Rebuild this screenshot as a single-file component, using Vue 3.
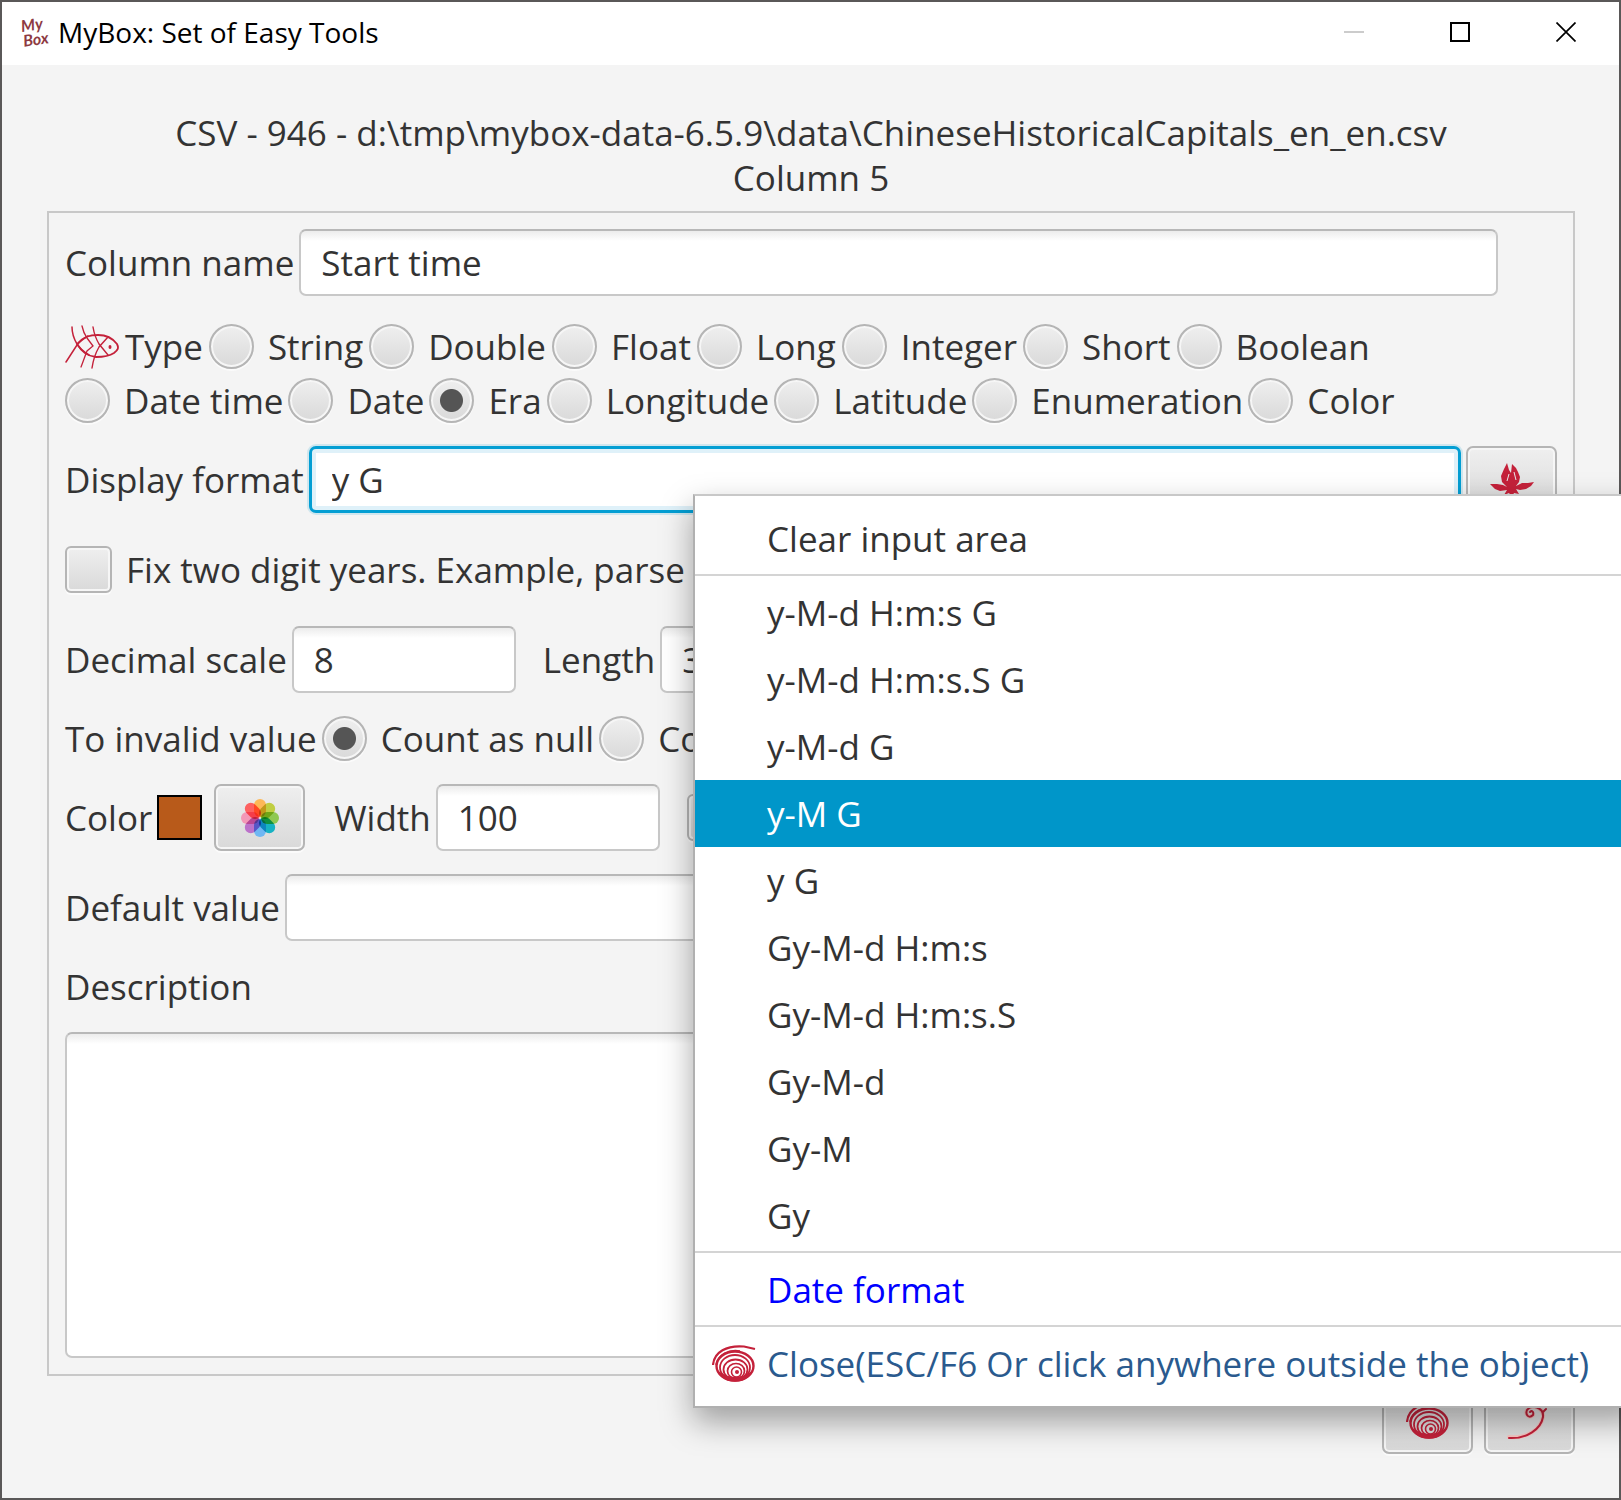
<script setup>
import { ref } from 'vue'

const columnName = ref('Start time')
const type = ref('Era')
const typeRows = [
  ['String', 'Double', 'Float', 'Long', 'Integer', 'Short', 'Boolean'],
  ['Date time', 'Date', 'Era', 'Longitude', 'Latitude', 'Enumeration', 'Color'],
]
const format = ref('y G')
const fixYears = ref(false)
const scale = ref('8')
const length = ref('32767')
const invalid = ref('null')
const width = ref('100')
const defaultValue = ref('')
const description = ref('')

const formats = [
  'y-M-d H:m:s G',
  'y-M-d H:m:s.S G',
  'y-M-d G',
  'y-M G',
  'y G',
  'Gy-M-d H:m:s',
  'Gy-M-d H:m:s.S',
  'Gy-M-d',
  'Gy-M',
  'Gy',
]
const hovered = 'y-M G'

const petals = [
  '#ffb347', '#bccb2f', '#85c440', '#00adc0',
  '#63b3f5', '#b866c8', '#f48fb1', '#ff5252',
]
</script>

<template>
  <div class="window">
    <header class="titlebar">
      <svg class="logo" viewBox="0 0 32 36" aria-hidden="true">
        <g transform="rotate(-8 16 18)" fill="#8d3a42">
          <text x="2" y="16" class="logo-text">My</text>
          <text x="2" y="31" class="logo-text">Box</text>
        </g>
      </svg>
      <span class="app-name">MyBox: Set of Easy Tools</span>
      <div class="controls">
        <button type="button" class="control" aria-label="Minimize" disabled>
          <svg width="20" height="20" viewBox="0 0 20 20"><path d="M0 10H20" stroke="#ccc" stroke-width="2" /></svg>
        </button>
        <button type="button" class="control" aria-label="Maximize">
          <svg width="20" height="20" viewBox="0 0 20 20"><rect x="1" y="1" width="18" height="18" fill="none" stroke="#000" stroke-width="2" /></svg>
        </button>
        <button type="button" class="control" aria-label="Close window">
          <svg width="20" height="20" viewBox="0 0 20 20"><path d="M0.500 0.500L19.500 19.500M19.500 0.500L0.500 19.500" stroke="#000" stroke-width="1.700" /></svg>
        </button>
      </div>
    </header>

    <main class="content">
      <h1 class="heading">
        CSV - 946 - d:\tmp\mybox-data-6.5.9\data\ChineseHistoricalCapitals_en_en.csv<br />Column 5
      </h1>

      <form class="panel" @submit.prevent>
        <div class="row name-row">
          <label for="name">Column name</label>
          <input id="name" v-model="columnName" class="field grow" type="text" />
        </div>

        <div class="types" role="radiogroup" aria-label="Type">
          <div v-for="(row, i) in typeRows" :key="i" class="type-row">
            <template v-if="i === 0">
              <svg class="fish" viewBox="0 0 54 46" fill="none" stroke="#c4213a" stroke-linecap="round" aria-hidden="true">
                <path d="M12 21C19 13 26 12 33 12C43 12 49 17 52 21C54 25 53 27 49 30C43 34 37 34 31 34C22 33 17 29 12 21" stroke-width="1.800" />
                <path d="M7 4C7 10 9 16 12 21C15 26 19 29 24 32M1 39L12 22C15 18 18 16 23 13" stroke-width="1.500" />
                <path d="M17 3C18 8 20 12 22 15L28 23L22 28C20 33 18 39 16 44" stroke-width="1.300" />
                <path d="M28 4C29 10 31 16 34 21L43 32M27 45C28 38 30 31 34 24L43 14" stroke-width="1.400" />
                <ellipse cx="45" cy="24" rx="1.500" ry="2" fill="#c4213a" stroke="none" />
              </svg>
              <span class="type-caption">Type</span>
            </template>
            <label v-for="name in row" :key="name" class="option">
              <input v-model="type" class="radio" type="radio" name="type" :value="name" />{{ name }}
            </label>
          </div>
        </div>

        <div class="row">
          <label for="format">Display format</label>
          <input id="format" v-model="format" class="field grow focused" type="text" />
          <button type="button" class="tool" aria-label="Examples">
            <svg width="44" height="36" viewBox="0 0 44 36" fill="#c4213a" aria-hidden="true">
              <path d="M17 1L19 8L21 11L22 2L26 6L28 10L30 15L29 20L26 24L32 21L38 21L44 20L41 24L36 27L30 28L26 27L29 32L24 31L22 35L19 31L14 33L17 28L10 29L5 27L0 22L7 22L13 23L17 25L12 20L11 14L14 7Z" />
              <path d="M19 12L17 19M24 10L26 18" stroke="#eaeaea" stroke-width="1" />
            </svg>
          </button>
        </div>

        <div class="row check-row">
          <label class="option">
            <input v-model="fixYears" class="checkbox" type="checkbox" />Fix two digit years. Example, parse y
          </label>
        </div>

        <div class="row">
          <label for="scale">Decimal scale</label>
          <input id="scale" v-model="scale" class="field short" type="text" />
          <label for="length" class="next">Length</label>
          <input id="length" v-model="length" class="field short" type="text" />
        </div>

        <div class="row radio-row" role="radiogroup" aria-label="To invalid value">
          <span>To invalid value</span>
          <label class="option"><input v-model="invalid" class="radio" type="radio" name="invalid" value="null" />Count as null</label>
          <label class="option"><input v-model="invalid" class="radio" type="radio" name="invalid" value="zero" />Co</label>
        </div>

        <div class="row">
          <span>Color</span>
          <span class="swatch"></span>
          <button type="button" class="tool palette" aria-label="Pick color">
            <svg class="flower" width="38" height="38" viewBox="-19 -19 38 38" aria-hidden="true">
              <rect
                v-for="(c, i) in petals"
                :key="c"
                class="petal"
                x="-6"
                y="-19"
                width="12"
                height="18"
                rx="6"
                :fill="c"
                :transform="`rotate(${i * 45})`"
              />
            </svg>
          </button>
          <label for="width" class="next">Width</label>
          <input id="width" v-model="width" class="field short" type="text" />
          <input class="checkbox next" type="checkbox" aria-label="Editable" />
        </div>

        <div class="row default-row">
          <label for="default">Default value</label>
          <input id="default" v-model="defaultValue" class="field grow" type="text" />
        </div>

        <label for="description" class="row description-label">Description</label>
        <textarea id="description" v-model="description" class="field area"></textarea>
      </form>

      <footer class="actions">
        <button type="button" class="tool" aria-label="Close">
          <svg class="spiral" viewBox="0 0 44 37"><use href="#shell" /></svg>
        </button>
        <button type="button" class="tool" aria-label="OK">
          <svg width="46" height="38" viewBox="0 0 46 38" fill="none" stroke-linecap="round" aria-hidden="true">
            <path d="M2 35C20 37 34 27 36 15C37 5 24 2 20 8C18 13 22 17 26 13" stroke="#fac8c4" stroke-width="4" />
            <path d="M2 36C20 37 34 27 36 15C37 5 24 2 20 8C18 13 22 17 26 13C27 10 25 8 23 10M36 10L39 7" stroke="#c4213a" stroke-width="2" />
          </svg>
        </button>
      </footer>
    </main>

    <div class="menu" role="menu">
      <button type="button" class="item" role="menuitem">Clear input area</button>
      <hr class="rule" />
      <button
        v-for="f in formats"
        :key="f"
        type="button"
        class="item"
        :class="{ hovered: f === hovered }"
        role="menuitem"
      >{{ f }}</button>
      <hr class="rule" />
      <a class="item link" href="#" role="menuitem">Date format</a>
      <hr class="rule" />
      <button type="button" class="item close" role="menuitem">
        <svg class="spiral" viewBox="0 0 44 37" aria-hidden="true">
          <g id="shell" fill="none" stroke="#c4213a">
            <path d="M1 20C2 7 15 0 32 1.500L43 4" stroke-width="2.200" />
            <path d="M4 20C6 10 16 4 28 6" stroke-width="1.500" />
            <ellipse cx="23" cy="21" rx="18.500" ry="14.500" stroke-width="2.400" />
            <ellipse cx="23" cy="22.500" rx="15" ry="12.500" stroke-width="1.800" />
            <ellipse cx="23.500" cy="24.500" rx="12" ry="10" stroke-width="1.800" />
            <ellipse cx="24" cy="26" rx="8.500" ry="7.500" stroke-width="1.700" />
            <ellipse cx="24.500" cy="27" rx="5" ry="5" stroke-width="1.600" />
            <circle cx="25" cy="27" r="2" fill="#c4213a" stroke="none" />
            <path d="M5 24C9 41 37 41 41 24C35 34 13 35 5 24Z" fill="#c4213a" stroke="none" />
          </g>
        </svg>
        Close(ESC/F6 Or click anywhere outside the object)
      </button>
    </div>
  </div>
</template>

<style>
body {
  margin: 0;
}
</style>

<style scoped>
.window,
.window * {
  box-sizing: border-box;
}
.window {
  position: relative;
  display: flex;
  flex-direction: column;
  min-height: 100vh;
  padding: 2px;
  overflow: hidden;
  background: #5a5858;
  color: #333;
  font-family: 'Open Sans', 'Noto Sans', sans-serif;
  font-size: 35px;
  line-height: 45px;
}
button,
input,
textarea {
  margin: 0;
  font: inherit;
  color: inherit;
}
.titlebar {
  display: flex;
  align-items: center;
  height: 63px;
  padding: 0 0 3px 18px;
  background: #fff;
  color: #000;
  font-size: 28px;
}
.logo {
  width: 32px;
  height: 36px;
  margin-right: 6px;
  overflow: visible;
}
.logo-text {
  font: italic 700 16px Lato, sans-serif;
}
.app-name {
  flex: 1;
}
.controls {
  display: flex;
}
.control {
  display: flex;
  align-items: center;
  justify-content: center;
  width: 106px;
  height: 60px;
  padding: 0;
  border: 0;
  background: none;
}
.content {
  flex: 1;
  display: flex;
  flex-direction: column;
  padding: 45px 44px 44px 45px;
  background: #f4f4f4;
}
.heading {
  margin: 0 0 11px;
  font-size: inherit;
  font-weight: 400;
  text-align: center;
}
.panel {
  flex: 1;
  display: flex;
  flex-direction: column;
  gap: 18px;
  padding: 16px;
  border: 2px solid #c8c8c8;
}
.row {
  display: flex;
  align-items: center;
  gap: 5px;
  white-space: nowrap;
}
.name-row {
  padding-right: 59px;
}
.field {
  height: 67px;
  min-width: 0;
  padding: 0 20px;
  border: 2px solid #c8c8c8;
  border-top-color: #b8b8b8;
  border-radius: 7px;
  outline: 0;
  background: linear-gradient(#ececec, #fff 10px);
}
.grow {
  flex: 1;
}
.short {
  width: 224px;
}
.focused {
  border: 3px solid #039ed3;
  background: #fff;
  box-shadow: 0 0 0 2px #cfe6ee, inset 0 0 0 4px #dff1f9;
}
.types {
  padding: 5px 0 1px;
}
.type-row {
  display: flex;
  align-items: center;
  gap: 5px;
  height: 54px;
  white-space: nowrap;
}
.type-row:first-child {
  gap: 6px;
}
.fish {
  width: 54px;
  height: 46px;
}
.option {
  display: flex;
  align-items: center;
  gap: 14px;
}
.radio,
.checkbox {
  appearance: none;
  flex: none;
  width: 45px;
  height: 45px;
  border: 2px solid #b5b5b5;
  background: linear-gradient(#efefef, #d9d9d9);
  box-shadow: inset 0 0 0 2px #f6f6f6, 0 2px 0 #fbfbfb;
}
.radio {
  border-radius: 50%;
}
.radio:checked {
  background: radial-gradient(circle, #555 11px, transparent 12px), linear-gradient(#efefef, #d9d9d9);
}
.checkbox {
  width: 47px;
  height: 47px;
  border-radius: 6px;
}
.check-row {
  height: 77px;
}
.radio-row {
  height: 55px;
}
.next {
  margin-left: 22px;
}
.tool {
  display: flex;
  align-items: center;
  justify-content: center;
  width: 91px;
  height: 67px;
  padding: 0;
  border: 2px solid #b5b5b5;
  border-radius: 7px;
  background: linear-gradient(#efefef, #d9d9d9);
  box-shadow: inset 0 0 0 2px #f6f6f6, 0 2px 0 #fbfbfb;
}
.swatch {
  width: 45px;
  height: 45px;
  border: 2px solid #000;
  background: #b85a1a;
}
.palette {
  margin: 0 2px 0 7px;
}
.flower {
  isolation: isolate;
}
.petal {
  mix-blend-mode: multiply;
  opacity: 0.9;
}
.default-row {
  padding-top: 5px;
}
.description-label {
  height: 55px;
}
.area {
  flex: 1;
  width: 100%;
  min-height: 160px;
  resize: none;
}
.actions {
  display: flex;
  justify-content: flex-end;
  gap: 11px;
  margin-top: 11px;
}
.spiral {
  flex: none;
  width: 44px;
  height: 37px;
}
.menu {
  position: absolute;
  top: 494px;
  right: -20px;
  left: 693px;
  padding: 9px 0;
  border: 2px solid #b0b0b0;
  border-top-color: #c8c8c8;
  background: #fff;
  box-shadow: 0 14px 30px rgba(0, 0, 0, 0.35);
}
.item {
  display: flex;
  align-items: center;
  width: 100%;
  height: 67px;
  padding: 0 0 0 72px;
  border: 0;
  background: none;
  text-decoration: none;
  text-align: left;
  white-space: nowrap;
}
.hovered {
  background: #0096c9;
  color: #fff;
}
.link {
  color: #00f;
}
.close {
  gap: 11px;
  padding-left: 17px;
  color: #2a5a8e;
}
.rule {
  height: 7px;
  margin: 0;
  border: 0;
  background: linear-gradient(#fff 2px, #d4d4d4 2px, #d4d4d4 4px, #fff 4px);
}
</style>
